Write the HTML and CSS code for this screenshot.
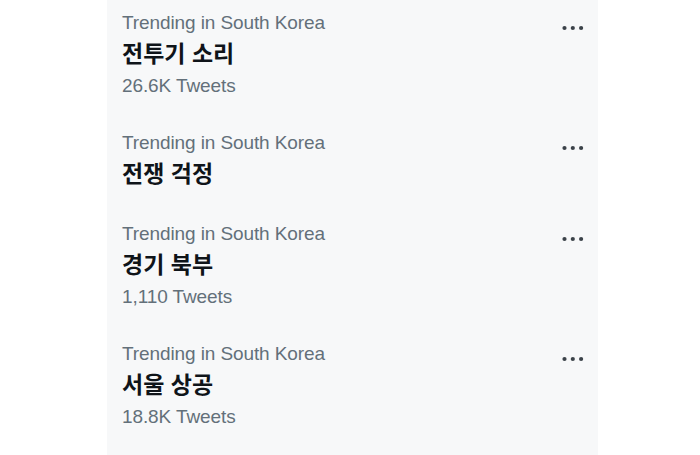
FILE: index.html
```html
<!DOCTYPE html>
<html lang="ko">
<head>
<meta charset="utf-8">
<link rel="stylesheet" href="styles.css">
</head>
<body>
<div class="page">
  <section class="panel">
    <div class="trend">
      <div class="info">
        <div class="meta">Trending in South Korea</div>
        <div class="title">전투기 소리</div>
        <div class="count">26.6K Tweets</div>
      </div>
      <svg class="more" width="24" height="8" viewBox="0 0 24 8"><circle cx="3.5" cy="4" r="2.1"/><circle cx="11.8" cy="4" r="2.1"/><circle cx="20.1" cy="4" r="2.1"/></svg>
    </div>
    <div class="trend">
      <div class="info">
        <div class="meta">Trending in South Korea</div>
        <div class="title">전쟁 걱정</div>
      </div>
      <svg class="more" width="24" height="8" viewBox="0 0 24 8"><circle cx="3.5" cy="4" r="2.1"/><circle cx="11.8" cy="4" r="2.1"/><circle cx="20.1" cy="4" r="2.1"/></svg>
    </div>
    <div class="trend">
      <div class="info">
        <div class="meta">Trending in South Korea</div>
        <div class="title">경기 북부</div>
        <div class="count">1,110 Tweets</div>
      </div>
      <svg class="more" width="24" height="8" viewBox="0 0 24 8"><circle cx="3.5" cy="4" r="2.1"/><circle cx="11.8" cy="4" r="2.1"/><circle cx="20.1" cy="4" r="2.1"/></svg>
    </div>
    <div class="trend">
      <div class="info">
        <div class="meta">Trending in South Korea</div>
        <div class="title">서울 상공</div>
        <div class="count">18.8K Tweets</div>
      </div>
      <svg class="more" width="24" height="8" viewBox="0 0 24 8"><circle cx="3.5" cy="4" r="2.1"/><circle cx="11.8" cy="4" r="2.1"/><circle cx="20.1" cy="4" r="2.1"/></svg>
    </div>
  </section>
</div>
</body>
</html>
```
FILE: styles.css
```css
html, body {
  margin: 0;
  padding: 0;
  background: #ffffff;
}
.page {
  width: 700px;
  height: 455px;
  padding-left: 107px;
  box-sizing: border-box;
  overflow: hidden;
}
.panel {
  width: 491px;
  height: 455px;
  background: #f7f8f9;
  display: flex;
  flex-direction: column;
}
.trend {
  display: flex;
  justify-content: space-between;
  align-items: flex-start;
  padding: 11px 13px 22px 15px;
}
.info {
  display: flex;
  flex-direction: column;
}
.meta, .count {
  font-family: "Liberation Sans", Arial, sans-serif;
  font-size: 19px;
  line-height: 24px;
  color: #63707a;
  letter-spacing: -0.1px;
}
.title {
  font-family: "Noto Sans CJK KR", "Noto Sans", sans-serif;
  font-weight: 700;
  font-size: 23px;
  line-height: 34px;
  color: #0f1419;
}
.count {
  margin-top: 5px;
}
.more {
  fill: #3b4249;
  margin-top: 13px;
}
```
